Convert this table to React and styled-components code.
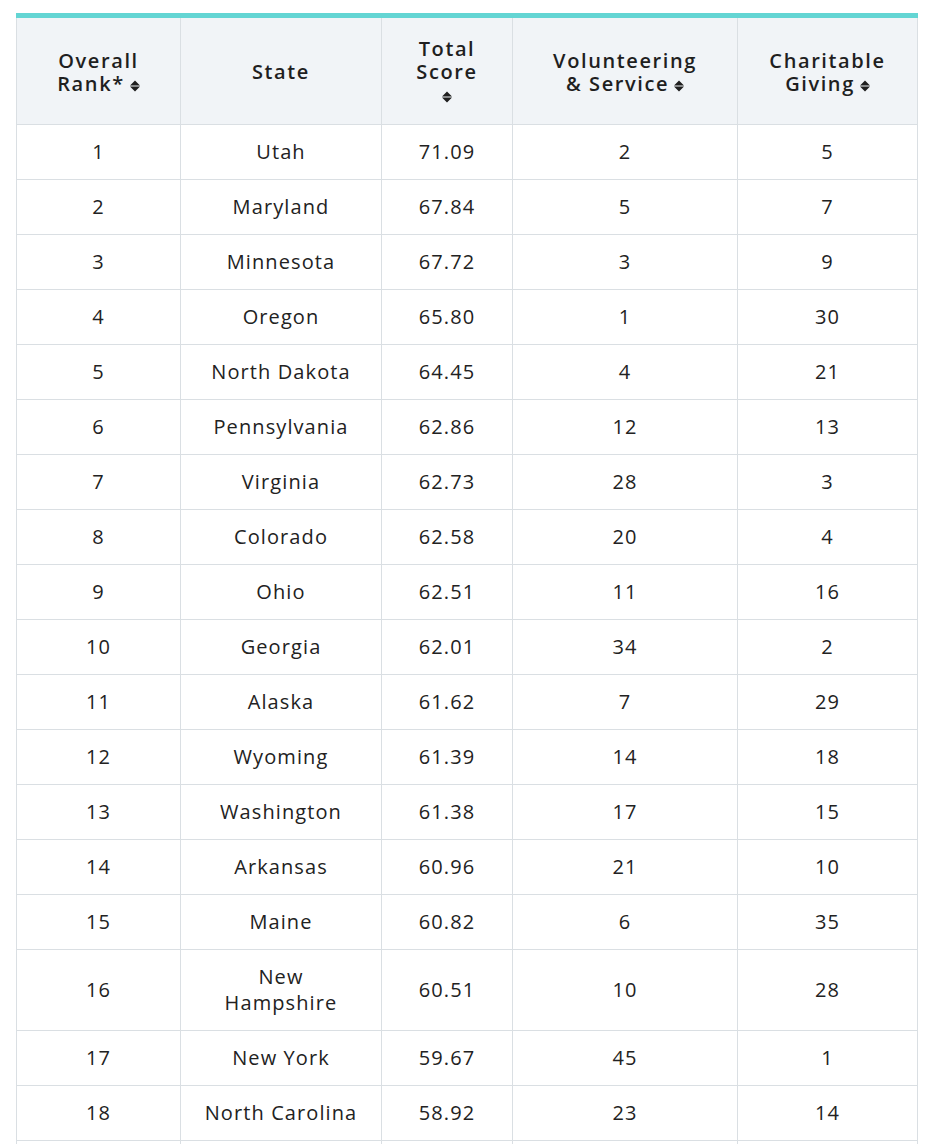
import styled, { createGlobalStyle } from 'styled-components';

const GlobalStyle = createGlobalStyle`
  body {
    margin: 0;
    background: #ffffff;
    font-family: 'Open Sans', 'Lato', sans-serif;
    color: #222222;
  }
`;

const Page = styled.div`
  padding: 13px 21px 0 16px;
`;

const Table = styled.table`
  width: 901px;
  border-collapse: collapse;
  table-layout: fixed;
  border-top: 5px solid #63d5d3;
`;

const HeadCell = styled.th`
  background: #f1f4f7;
  border: 1px solid #dadfe3;
  border-top: none;
  padding: 19px 4px 18px;
  font-size: 20px;
  line-height: 23px;
  font-weight: 600;
  letter-spacing: 1.6px;
  text-align: center;
  color: #1f1f1f;
  vertical-align: middle;
`;

const Cell = styled.td`
  border: 1px solid #dadfe3;
  padding: 14px 4px;
  font-size: 20px;
  line-height: 26px;
  letter-spacing: 1.1px;
  text-align: center;
  color: #222222;
`;

const Sort = styled.svg`
  width: 10px;
  height: 12px;
  margin-left: ${(p) => (p.$alone ? 0 : 5)}px;
  vertical-align: -1px;
`;

function SortIcon({ alone }) {
  return (
    <Sort viewBox="0 0 10 12" $alone={alone}>
      <path d="M5 0.5 L10 5.5 H0 Z M0 6.5 H10 L5 11.5 Z" fill="#1f1f1f" />
    </Sort>
  );
}

const columns = [
  { lines: ['Overall', 'Rank*'], width: 164, sort: 'inline' },
  { lines: ['State'], width: 201 },
  { lines: ['Total', 'Score'], width: 131, sort: 'below' },
  { lines: ['Volunteering', '& Service'], width: 225, sort: 'inline' },
  { lines: ['Charitable', 'Giving'], width: 180, sort: 'inline' },
];

const rows = [
  [1, 'Utah', '71.09', 2, 5],
  [2, 'Maryland', '67.84', 5, 7],
  [3, 'Minnesota', '67.72', 3, 9],
  [4, 'Oregon', '65.80', 1, 30],
  [5, 'North Dakota', '64.45', 4, 21],
  [6, 'Pennsylvania', '62.86', 12, 13],
  [7, 'Virginia', '62.73', 28, 3],
  [8, 'Colorado', '62.58', 20, 4],
  [9, 'Ohio', '62.51', 11, 16],
  [10, 'Georgia', '62.01', 34, 2],
  [11, 'Alaska', '61.62', 7, 29],
  [12, 'Wyoming', '61.39', 14, 18],
  [13, 'Washington', '61.38', 17, 15],
  [14, 'Arkansas', '60.96', 21, 10],
  [15, 'Maine', '60.82', 6, 35],
  [16, ['New', 'Hampshire'], '60.51', 10, 28],
  [17, 'New York', '59.67', 45, 1],
  [18, 'North Carolina', '58.92', 23, 14],
  [19, 'Iowa', '58.74', 8, 32],
];

function HeaderLabel({ col }) {
  return col.lines.map((line, i) => {
    const last = i === col.lines.length - 1;
    return (
      <span key={line}>
        {line}
        {last && col.sort === 'inline' && <SortIcon />}
        {!last && <br />}
      </span>
    );
  });
}

export default function App() {
  return (
    <>
      <GlobalStyle />
      <Page>
        <Table>
          <colgroup>
            {columns.map((c, i) => (
              <col key={i} style={{ width: c.width }} />
            ))}
          </colgroup>
          <thead>
            <tr>
              {columns.map((c, i) => (
                <HeadCell key={i}>
                  <HeaderLabel col={c} />
                  {c.sort === 'below' && (
                    <>
                      <br />
                      <SortIcon alone />
                    </>
                  )}
                </HeadCell>
              ))}
            </tr>
          </thead>
          <tbody>
            {rows.map((r) => (
              <tr key={r[0]}>
                {r.map((v, i) => (
                  <Cell key={i}>
                    {Array.isArray(v) ? (
                      <>
                        {v[0]}
                        <br />
                        {v[1]}
                      </>
                    ) : (
                      v
                    )}
                  </Cell>
                ))}
              </tr>
            ))}
          </tbody>
        </Table>
      </Page>
    </>
  );
}
